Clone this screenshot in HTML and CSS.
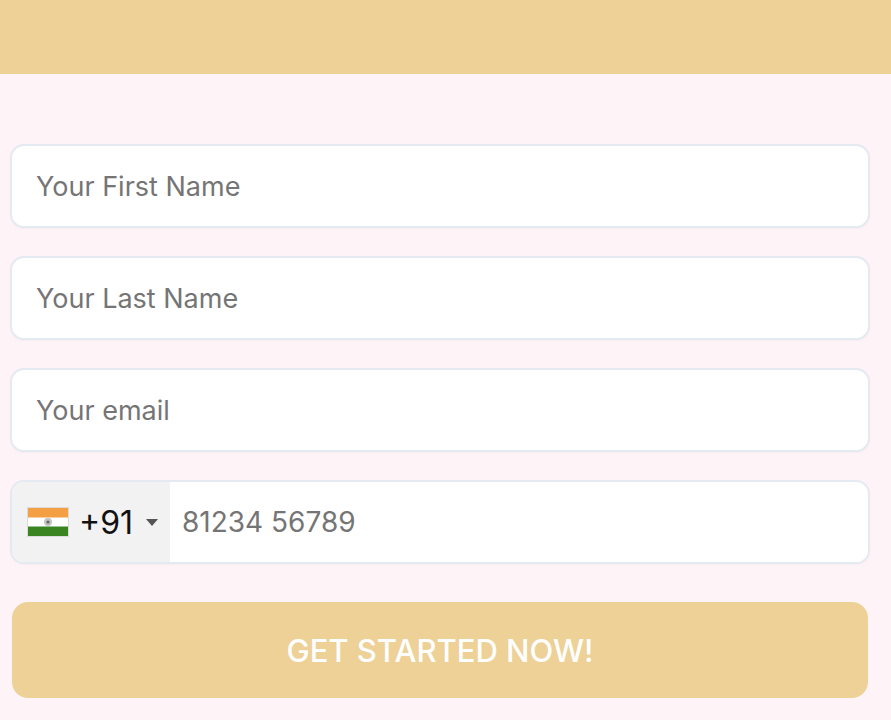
FILE: index.html
```html
<!DOCTYPE html>
<html lang="en">
<head>
    <meta charset="UTF-8">
    <meta name="viewport" content="width=device-width, initial-scale=1.0">
    <title>Get Started</title>
    <link rel="stylesheet" href="styles.css">
</head>
<body>
    <header class="top-bar"></header>

    <form class="signup-form">
        <input class="text-field" type="text" placeholder="Your First Name">
        <input class="text-field" type="text" placeholder="Your Last Name">
        <input class="text-field" type="text" placeholder="Your email">

        <div class="phone-field">
            <div class="country-select">
                <svg class="flag" width="42" height="30" viewBox="0 0 42 30">
                    <rect x="0.5" y="0.5" width="41" height="29" fill="#fff" stroke="#dcdcdc"/>
                    <rect x="1" y="1" width="40" height="9.5" fill="#f59f45"/>
                    <rect x="1" y="19.5" width="40" height="9.5" fill="#3b8422"/>
                    <circle cx="21" cy="15" r="4" fill="#c4c4c4"/>
                    <circle cx="21" cy="15" r="1.6" fill="#666"/>
                </svg>
                <span class="dial-code">+91</span>
                <span class="caret"></span>
            </div>
            <input class="phone-input" type="text" placeholder="81234 56789">
        </div>

        <button class="submit-btn" type="button">GET STARTED NOW!</button>
    </form>
</body>
</html>
```

FILE: styles.css
```css
* {
    box-sizing: border-box;
}

body {
    margin: 0;
    background-color: #fef4f8;
    font-family: Inter, "Liberation Sans", sans-serif;
}

.top-bar {
    height: 74px;
    background-color: #edd197;
}

.signup-form {
    display: flex;
    flex-direction: column;
    gap: 28px;
    padding: 70px 21px 0 10px;
}

.text-field,
.phone-field {
    width: 100%;
    height: 84px;
    border: 2px solid #e5e9f0;
    border-radius: 14px;
    background-color: #ffffff;
    box-shadow: 0 1px 2px rgba(0, 0, 0, 0.03);
}

.text-field {
    padding: 0 24px;
    font-family: inherit;
    font-size: 27px;
    color: #333;
    outline: none;
}

input::placeholder {
    color: #757575;
    opacity: 1;
}

.phone-field {
    display: flex;
    overflow: hidden;
}

.country-select {
    display: flex;
    align-items: center;
    width: 158px;
    padding-left: 15px;
    background-color: #f2f2f2;
}

.flag {
    flex: none;
}

.dial-code {
    margin-left: 10px;
    font-size: 32px;
    color: #111;
}

.caret {
    margin-left: 13px;
    border-left: 6px solid transparent;
    border-right: 6px solid transparent;
    border-top: 7px solid #555;
}

.phone-input {
    flex: 1;
    min-width: 0;
    padding: 0 12px;
    border: none;
    outline: none;
    font-family: inherit;
    font-size: 28px;
}

.submit-btn {
    width: 856px;
    height: 96px;
    margin: 10px 0 0 2px;
    border: none;
    border-radius: 16px;
    background-color: #edd197;
    color: #ffffff;
    font-family: inherit;
    font-size: 31px;
    font-weight: 500;
    cursor: pointer;
}
```
